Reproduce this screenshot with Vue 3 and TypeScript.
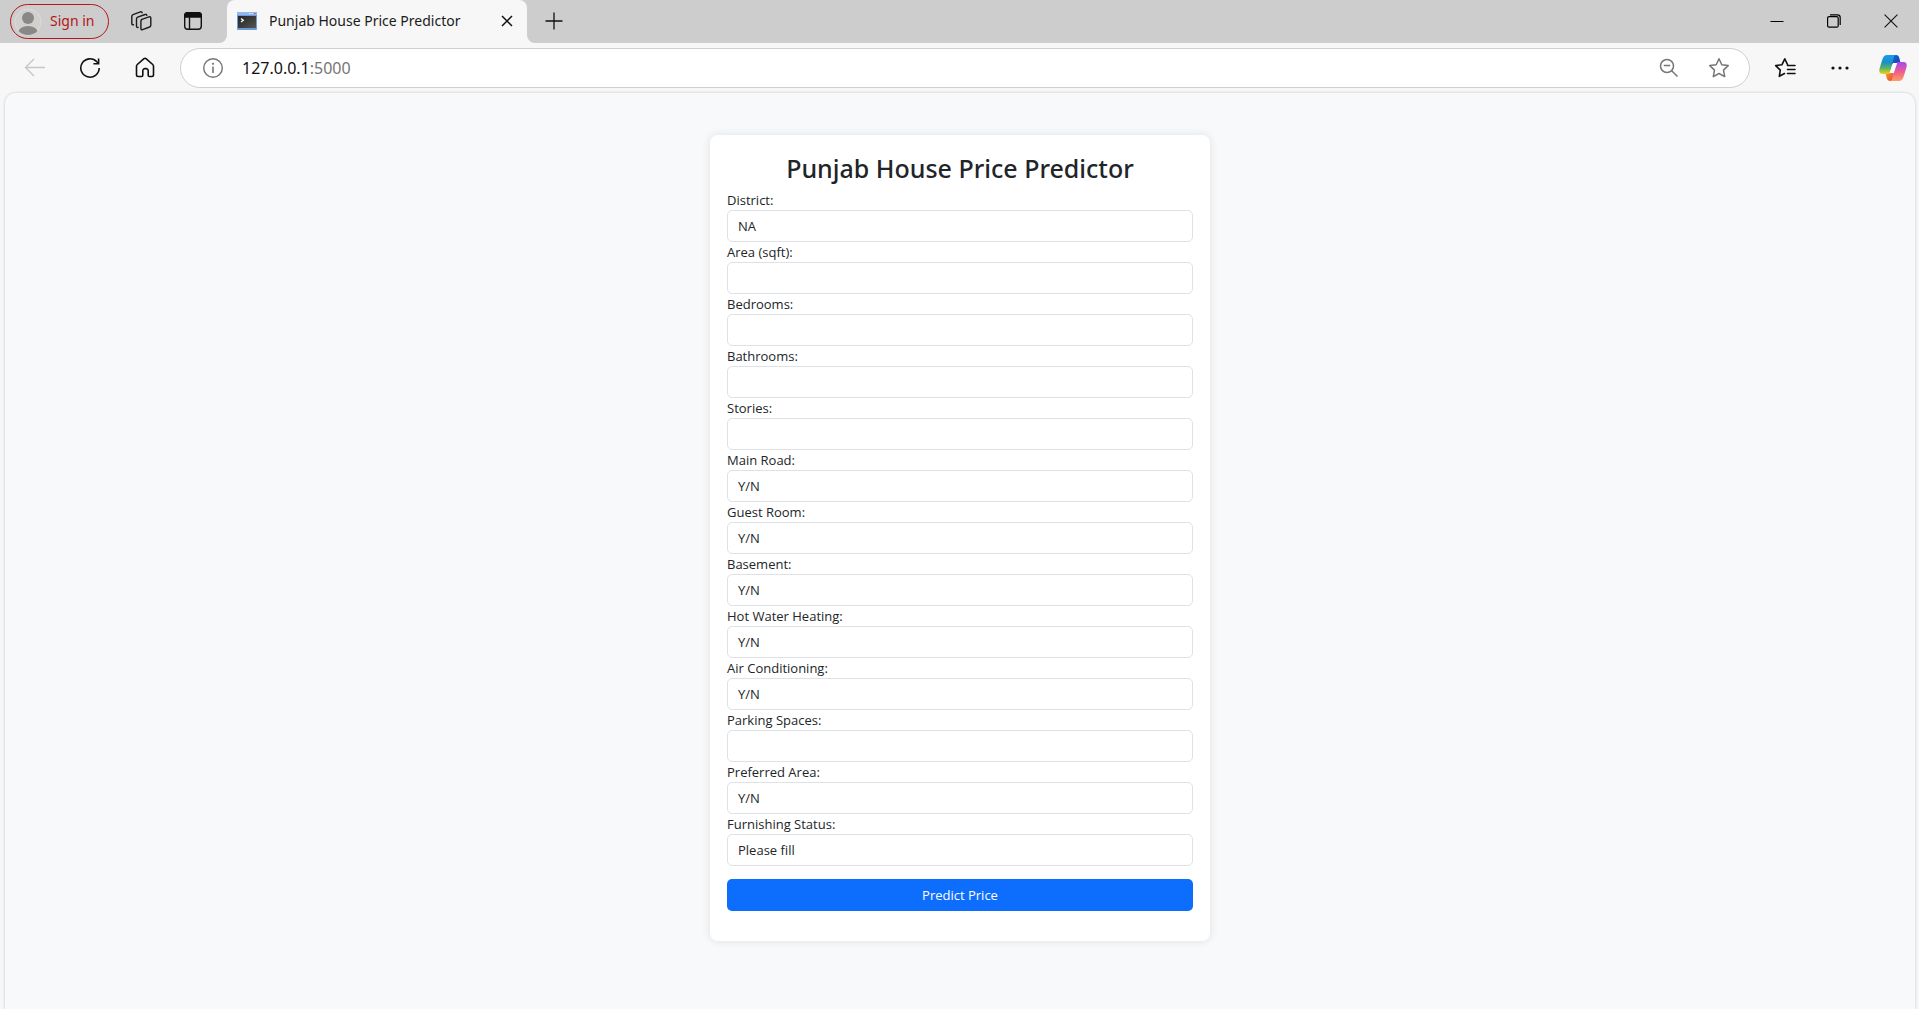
<script setup lang="ts">
import { reactive } from 'vue'

interface Field {
  id: string
  label: string
  options?: string[]
}

const yesNo = ['Y/N', 'Yes', 'No']

const fields: Field[] = [
  { id: 'district', label: 'District:', options: ['NA', 'Amritsar', 'Jalandhar', 'Ludhiana', 'Patiala'] },
  { id: 'area', label: 'Area (sqft):' },
  { id: 'bedrooms', label: 'Bedrooms:' },
  { id: 'bathrooms', label: 'Bathrooms:' },
  { id: 'stories', label: 'Stories:' },
  { id: 'mainroad', label: 'Main Road:', options: yesNo },
  { id: 'guestroom', label: 'Guest Room:', options: yesNo },
  { id: 'basement', label: 'Basement:', options: yesNo },
  { id: 'hotwater', label: 'Hot Water Heating:', options: yesNo },
  { id: 'aircon', label: 'Air Conditioning:', options: yesNo },
  { id: 'parking', label: 'Parking Spaces:' },
  { id: 'prefarea', label: 'Preferred Area:', options: yesNo },
  { id: 'furnishing', label: 'Furnishing Status:', options: ['Please fill', 'Furnished', 'Semi-furnished', 'Unfurnished'] },
]

const values = reactive<Record<string, string>>(
  Object.fromEntries(fields.map((f) => [f.id, f.options ? f.options[0] : ''])),
)
</script>

<template>
  <div class="browser">
    <header class="tabstrip">
      <button class="signin" type="button">
        <svg class="avatar" width="28" height="28" viewBox="0 0 28 28" aria-hidden="true">
          <defs>
            <clipPath id="avatar-clip"><circle cx="14" cy="14" r="13" /></clipPath>
          </defs>
          <circle cx="14" cy="14" r="13" fill="#d2d0ce" stroke="#dddbd8" />
          <g clip-path="url(#avatar-clip)" fill="#8a8886">
            <circle cx="14" cy="10" r="6" />
            <ellipse cx="14" cy="25" rx="10" ry="7" />
          </g>
        </svg>
        <span>Sign in</span>
      </button>
      <button class="strip-icon" type="button" aria-label="Workspaces">
        <svg width="22" height="22" viewBox="0 0 22 22" fill="none" stroke="#1b1b1b" stroke-width="1.4" stroke-linejoin="round" stroke-linecap="round">
          <path d="M11.2 9.6 19 6.9c1-.3 1.8.1 1.8 1.1v7.300c0 .8-.4 1.400-1.200 1.700l-7 2.600c-1 .3-1.700-.1-1.700-1.100v-7.200c0-.8.300-1.400 1-1.700z" />
          <path d="M8.200 17.400c-1 .2-1.700-.2-1.700-1.200V8.900c0-.8.400-1.400 1.200-1.700l7.400-2.700c.9-.3 1.500 0 1.700.800" />
          <path d="M3.500 14.800c-1 .2-1.700-.2-1.700-1.200V6.300c0-.8.400-1.400 1.200-1.700l7.400-2.700c.9-.3 1.500 0 1.700.800" />
        </svg>
      </button>
      <button class="strip-icon" type="button" aria-label="Tab actions">
        <svg width="20" height="20" viewBox="0 0 20 20" fill="none" stroke="#111" stroke-width="1.400">
          <rect x="1.700" y="1.700" width="16.600" height="16.600" rx="3" />
          <path d="M1.700 6V4.500a2.800 2.800 0 0 1 2.800-2.800h11a2.800 2.800 0 0 1 2.800 2.800V6z" fill="#111" />
          <path d="M6.500 6v12" />
        </svg>
      </button>
      <div class="tab">
        <svg class="flare" width="8" height="8" viewBox="0 0 8 8" aria-hidden="true"><path d="M8 0v8H0a8 8 0 0 0 8-8z" fill="#f7f7f7" /></svg>
        <div class="tab-body">
          <svg width="20" height="18" viewBox="0 0 20 18" aria-hidden="true">
            <defs>
              <linearGradient id="term" x1="0" y1="0" x2="1" y2="1">
                <stop offset="0" stop-color="#222" /><stop offset="1" stop-color="#555" />
              </linearGradient>
            </defs>
            <rect width="20" height="18" rx="1" fill="#6f9ad8" />
            <rect width="20" height="3" fill="#8fb9ee" />
            <path d="M12 1.500h1.500M14.500 1.500H16" stroke="#d6e6fa" />
            <path d="M17 1.500h2" stroke="#e0604c" />
            <rect x="1" y="4" width="18" height="12" fill="url(#term)" />
            <path d="m4 6.500 2.300 1.800L4 10" fill="none" stroke="#fff" stroke-width="1.300" />
          </svg>
          <span class="tab-title">Punjab House Price Predictor</span>
          <button class="tab-close" type="button" aria-label="Close tab">
            <svg width="12" height="12" viewBox="0 0 12 12" stroke="#111" stroke-width="1.500"><path d="m1 1 10 10M11 1 1 11" /></svg>
          </button>
        </div>
        <svg class="flare" width="8" height="8" viewBox="0 0 8 8" aria-hidden="true"><path d="M0 0v8h8a8 8 0 0 1-8-8z" fill="#f7f7f7" /></svg>
      </div>
      <button class="new-tab" type="button" aria-label="New tab">
        <svg width="18" height="18" viewBox="0 0 18 18" stroke="#111" stroke-width="1.300"><path d="M9 .5v17M.5 9h17" /></svg>
      </button>
      <div class="window-buttons">
        <button type="button" aria-label="Minimize">
          <svg width="14" height="14" viewBox="0 0 14 14" stroke="#000"><path d="M.5 7.500h13" /></svg>
        </button>
        <button type="button" aria-label="Restore">
          <svg width="14" height="14" viewBox="0 0 14 14" fill="none" stroke="#000" stroke-width="1.200">
            <rect x=".6" y="2.600" width="10.600" height="10.600" rx="1.500" />
            <path d="M3 .8h7.500a2.700 2.700 0 0 1 2.700 2.700V11" />
          </svg>
        </button>
        <button type="button" aria-label="Close">
          <svg width="14" height="14" viewBox="0 0 14 14" stroke="#111" stroke-width="1.100"><path d="m.6.600 12.800 12.800M13.400.600.6 13.400" /></svg>
        </button>
      </div>
    </header>

    <nav class="toolbar">
      <button class="tool" type="button" aria-label="Back" disabled>
        <svg width="22" height="20" viewBox="0 0 22 20" fill="none" stroke="#c6c6c6" stroke-width="1.400"><path d="M21 9.500H1.500M10 1 1.500 9.500 10 18" /></svg>
      </button>
      <button class="tool" type="button" aria-label="Refresh">
        <svg width="22" height="22" viewBox="0 0 22 22" fill="none" stroke="#111" stroke-width="1.600">
          <path d="M20.200 11A9.200 9.200 0 1 1 17.800 4.800L19.500 6.500" />
          <path d="M19.600 1.500v5.200h-5.200" />
        </svg>
      </button>
      <button class="tool" type="button" aria-label="Home">
        <svg width="20" height="22" viewBox="0 0 20 22" fill="none" stroke="#111" stroke-width="1.600" stroke-linejoin="round">
          <path d="M1.500 9.200c0-.7.300-1.300.8-1.700l6.400-5.700c.8-.7 1.800-.7 2.600 0l6.400 5.700c.5.400.8 1 .8 1.700v8.600c0 1-.7 1.700-1.700 1.700h-2.300c-.8 0-1.300-.5-1.300-1.300v-4.400a2.200 2.200 0 0 0-2.200-2.200h-1a2.200 2.200 0 0 0-2.200 2.200v4.400c0 .8-.5 1.300-1.300 1.300H3.200c-1 0-1.700-.7-1.700-1.700z" />
        </svg>
      </button>
      <div class="address">
        <svg width="22" height="22" viewBox="0 0 22 22" fill="none" stroke="#767676" stroke-width="1.400" aria-hidden="true">
          <circle cx="11" cy="11" r="9.300" />
          <path d="M11 9.500V16" stroke-width="1.600" /><circle cx="11" cy="6.800" r="1.100" fill="#767676" stroke="none" />
        </svg>
        <a class="url" href="#">127.0.0.1<span class="port">:5000</span></a>
        <button class="address-icon" type="button" aria-label="Zoom">
          <svg width="20" height="20" viewBox="0 0 20 20" fill="none" stroke="#767676" stroke-width="1.500">
            <circle cx="8" cy="8" r="6.500" /><path d="M4.800 7.500h6.400M12.700 12.700l5.800 5.800" />
          </svg>
        </button>
        <button class="address-icon" type="button" aria-label="Add to favorites">
          <svg width="22" height="22" viewBox="0 0 22 22" fill="none" stroke="#767676" stroke-width="1.500" stroke-linejoin="round">
            <path d="m11 1.800 2.800 5.900 6.400.9-4.700 4.500 1.200 6.500L11 16.500l-5.700 3.100 1.200-6.500-4.700-4.500 6.400-.9z" />
          </svg>
        </button>
      </div>
      <button class="tool" type="button" aria-label="Favorites">
        <svg width="22" height="22" viewBox="0 0 22 22" fill="none" stroke="#111" stroke-width="1.600" stroke-linejoin="round" stroke-linecap="round">
          <path d="M10.500 16.500 5.300 19.300l1-6.200-4.600-4.500 6.300-.9 2.800-5.900 2.700 5.700" />
          <path d="M13.500 8.500H21M13.500 12.500H21M13.500 16.500H21" />
        </svg>
      </button>
      <button class="tool" type="button" aria-label="Settings and more">
        <svg width="18" height="4" viewBox="0 0 18 4" fill="#111"><circle cx="2" cy="2" r="1.600" /><circle cx="9" cy="2" r="1.600" /><circle cx="16" cy="2" r="1.600" /></svg>
      </button>
      <button class="tool copilot" type="button" aria-label="Copilot">
        <svg width="28" height="26" viewBox="0 0 28 26">
          <defs>
            <linearGradient id="cp-a" x1="0" y1="0" x2="0" y2="1">
              <stop offset="0" stop-color="#1b9cf0" /><stop offset=".4" stop-color="#1c8fc4" /><stop offset=".7" stop-color="#5cb85a" /><stop offset="1" stop-color="#f5cf1b" />
            </linearGradient>
            <linearGradient id="cp-b" x1="0" y1="0" x2="0" y2="1">
              <stop offset="0" stop-color="#a04cf0" /><stop offset=".5" stop-color="#ee5a94" /><stop offset="1" stop-color="#ffa05a" />
            </linearGradient>
            <linearGradient id="cp-c" x1="0" y1="0" x2="1" y2="1">
              <stop offset="0" stop-color="#1268d8" /><stop offset="1" stop-color="#1d3fb8" />
            </linearGradient>
            <linearGradient id="cp-d" x1="0" y1="0" x2="1" y2="1">
              <stop offset="0" stop-color="#f9a51a" /><stop offset="1" stop-color="#e8403c" />
            </linearGradient>
          </defs>
          <path d="M13 0h4c2 0 2.800 1.200 3.400 3.200L21.500 8H17l-5 2z" fill="url(#cp-c)" />
          <path d="M15 26h-4c-2 0-2.800-1.200-3.400-3.200L6.500 18H11l5-2z" fill="url(#cp-d)" />
          <path d="M17 0H8C5.500 0 4.200 1.800 3.200 5L.7 13c-1 3.500-.5 6 3 6H8.500c1.500 0 2.300-1 2.800-2.600L14.500 4c.6-2.500 1-4 2.500-4z" fill="url(#cp-a)" />
          <path d="M11 26h9c2.500 0 3.800-1.800 4.800-5l2.500-8c1-3.500.500-6-3-6h-4.800c-1.500 0-2.300 1-2.800 2.600L13.500 22c-.6 2.500-1 4-2.500 4z" fill="url(#cp-b)" />
          <path d="M14 8h4.200l-3.400 10h-4.200z" fill="#fff" />
        </svg>
      </button>
    </nav>

    <main class="page">
      <form class="card" @submit.prevent>
        <h1>Punjab House Price Predictor</h1>
        <div v-for="field in fields" :key="field.id" class="field">
          <label :for="field.id">{{ field.label }}</label>
          <select v-if="field.options" :id="field.id" v-model="values[field.id]" class="control">
            <option v-for="option in field.options" :key="option">{{ option }}</option>
          </select>
          <input v-else :id="field.id" v-model="values[field.id]" class="control" type="text" inputmode="numeric" />
        </div>
        <button class="submit" type="submit">Predict Price</button>
      </form>
    </main>
  </div>
</template>

<style>
body {
  margin: 0;
  background: #f7f7f7;
}
</style>

<style scoped>
.browser {
  display: flex;
  flex-direction: column;
  min-height: 100vh;
  font-family: "Noto Sans", "Open Sans", sans-serif;
  color: #212529;
}

.browser * {
  box-sizing: border-box;
}

button {
  display: flex;
  align-items: center;
  justify-content: center;
  margin: 0;
  padding: 0;
  border: 0;
  background: none;
  font-family: inherit;
}

svg {
  display: block;
  flex: none;
}

.tabstrip {
  display: flex;
  align-items: flex-start;
  height: 43px;
  padding-left: 10px;
  background: #cdcdcd;
}

.signin {
  justify-content: flex-start;
  gap: 8px;
  width: 99px;
  height: 35px;
  margin: 4px 6px 0 0;
  padding-left: 3px;
  border: 1px solid #b3171b;
  border-radius: 18px;
  color: #b3171b;
  font-size: 14px;
  line-height: 20px;
  white-space: nowrap;
}

.signin span {
  margin-bottom: 2px;
}

.strip-icon {
  width: 52px;
  height: 42px;
}

.tab {
  display: flex;
  align-items: flex-end;
  width: 316px;
  height: 43px;
}

.tab-body {
  display: flex;
  flex: 1;
  align-items: center;
  height: 43px;
  padding: 0 14px 2px 10px;
  border-radius: 8px 8px 0 0;
  background: #f7f7f7;
}

.tab-title {
  flex: 1;
  margin-left: 12px;
  color: #1b1b1b;
  font-size: 14px;
  white-space: nowrap;
}

.new-tab {
  width: 38px;
  height: 42px;
}

.window-buttons {
  display: flex;
  margin-left: auto;
}

.window-buttons button {
  width: 57px;
  height: 42px;
}

.toolbar {
  display: flex;
  align-items: center;
  height: 50px;
  padding: 0 1px 0 7px;
  background: #f7f7f7;
}

.tool {
  width: 55px;
  height: 40px;
}

.copilot {
  width: 51px;
}

.address {
  display: flex;
  flex: 1;
  align-items: center;
  height: 40px;
  margin: 0 7px 0 8px;
  padding: 0 5px 0 21px;
  border: 1px solid #cfcfcf;
  border-radius: 20px;
  background: #fff;
}

.url {
  flex: 1;
  margin-left: 18px;
  color: #111;
  font-size: 16px;
  text-decoration: none;
}

.port {
  color: #767676;
}

.address-icon {
  width: 50px;
  height: 38px;
}

.page {
  flex: 1;
  margin: 0 4px 0 5px;
  padding: 42px 16px;
  border-radius: 10px 10px 0 0;
  background: #f8f9fb;
  box-shadow: 0 0 3px rgba(0, 0, 0, 0.2);
}

.card {
  max-width: 500px;
  margin: 0 auto;
  padding: 16px 17px 30px;
  border-radius: 8px;
  background: #fff;
  box-shadow: 0 0 10px rgba(0, 0, 0, 0.1);
  font-family: "Open Sans", "Noto Sans", sans-serif;
}

h1 {
  margin: 0 0 6px;
  font-family: "Noto Sans", "Open Sans", sans-serif;
  font-size: 25px;
  font-weight: 500;
  line-height: 34px;
  text-align: center;
}

label {
  display: block;
  padding-bottom: 1px;
  font-size: 13px;
  line-height: 18px;
}

.field {
  margin-bottom: 1px;
}

.control {
  display: block;
  width: 100%;
  height: 32px;
  margin: 0;
  padding: 0 10px;
  appearance: none;
  border: 1px solid #dee2e6;
  border-radius: 5px;
  background: #fff;
  color: #212529;
  font-family: inherit;
  font-size: 13px;
}

.submit {
  width: 100%;
  height: 32px;
  margin-top: 13px;
  border-radius: 5px;
  background: #0d6efd;
  color: #fff;
  font-size: 13px;
}
</style>
